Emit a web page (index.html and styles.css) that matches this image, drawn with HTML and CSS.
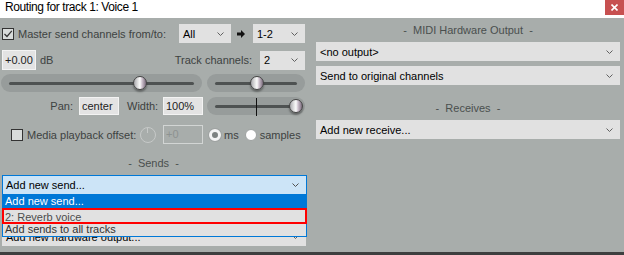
FILE: index.html
```html
<!DOCTYPE html>
<html lang="en">
<head>
    <meta charset="UTF-8">
    <meta name="viewport" content="width=device-width, initial-scale=1.0">
    <title>Routing for track 1: Voice 1</title>
    <link rel="stylesheet" href="styles.css">
</head>
<body>

<div class="window">
    <div class="titlebar">
        <span class="title">Routing for track 1: Voice 1</span>
        <span class="close-btn">
            <svg width="7" height="7" viewBox="0 0 7 7"><path d="M0.5 0.5 L6.5 6.5 M6.5 0.5 L0.5 6.5" stroke="#fff" stroke-width="1.6"/></svg>
        </span>
    </div>

    <div class="panes">
        <!-- left side: master send, volume/pan, sends -->
        <div class="left">
            <div class="row row-master">
                <span class="checkbox">
                    <svg width="10" height="10" viewBox="0 0 10 10"><path d="M1.5 5 L4 7.5 L8.8 1.8" fill="none" stroke="#333" stroke-width="1.2"/></svg>
                </span>
                <span class="label master-label">Master send channels from/to:</span>
                <div class="combo combo-small">All<svg class="chev" width="7" height="4" viewBox="0 0 7 4"><path d="M0.5 0.5 L3.5 3.5 L6.5 0.5" fill="none" stroke="#606060"/></svg></div>
                <svg class="arrow" width="8" height="8" viewBox="0 0 8 8"><path d="M0 2.5 H4 V0 L8 4 L4 8 V5.5 H0 Z" fill="#111"/></svg>
                <div class="combo combo-small">1-2<svg class="chev" width="7" height="4" viewBox="0 0 7 4"><path d="M0.5 0.5 L3.5 3.5 L6.5 0.5" fill="none" stroke="#606060"/></svg></div>
            </div>

            <div class="row row-volume">
                <span class="field field-vol">+0.00</span>
                <span class="label unit">dB</span>
                <span class="label channels-label">Track channels:</span>
                <div class="combo combo-channels">2<svg class="chev" width="7" height="4" viewBox="0 0 7 4"><path d="M0.5 0.5 L3.5 3.5 L6.5 0.5" fill="none" stroke="#606060"/></svg></div>
            </div>

            <div class="row row-sliders">
                <div class="trough trough-volume">
                    <div class="rail"></div>
                    <div class="knob" style="left: 139px"></div>
                </div>
                <div class="trough trough-small">
                    <div class="rail"></div>
                    <div class="knob" style="left: 50px"></div>
                </div>
            </div>

            <div class="row row-pan">
                <span class="label pan-label">Pan:</span>
                <span class="field field-pan">center</span>
                <span class="label width-label">Width:</span>
                <span class="field field-pan">100%</span>
                <div class="trough trough-small">
                    <div class="rail"></div>
                    <div class="center-mark"></div>
                    <div class="knob" style="left: 89px"></div>
                </div>
            </div>

            <div class="row row-offset">
                <span class="checkbox checkbox-offset"></span>
                <span class="label offset-label">Media playback offset:</span>
                <span class="dial"></span>
                <span class="field field-disabled">+0</span>
                <span class="radio radio-on"></span>
                <span class="label radio-label">ms</span>
                <span class="radio"></span>
                <span class="label radio-label">samples</span>
            </div>

            <div class="section-title">-&nbsp; Sends &nbsp;-</div>

            <div class="send-area">
                <div class="combo combo-active">Add new send...<svg class="chev" width="7" height="4" viewBox="0 0 7 4"><path d="M0.5 0.5 L3.5 3.5 L6.5 0.5" fill="none" stroke="#505050"/></svg></div>
                <ul class="dropdown">
                    <li class="item item-selected">Add new send...</li>
                    <li class="item item-marked">2: Reverb voice</li>
                    <li class="item item-last">Add sends to all tracks</li>
                </ul>
                <div class="combo combo-hw">Add new hardware output...<svg class="chev" width="7" height="4" viewBox="0 0 7 4"><path d="M0.5 0.5 L3.5 3.5 L6.5 0.5" fill="none" stroke="#606060"/></svg></div>
            </div>
        </div>

        <!-- right side: midi output, receives -->
        <div class="right">
            <div class="section-title section-top">-&nbsp; MIDI Hardware Output &nbsp;-</div>
            <div class="combo combo-wide">&lt;no output&gt;<svg class="chev" width="7" height="4" viewBox="0 0 7 4"><path d="M0.5 0.5 L3.5 3.5 L6.5 0.5" fill="none" stroke="#606060"/></svg></div>
            <div class="combo combo-wide">Send to original channels<svg class="chev" width="7" height="4" viewBox="0 0 7 4"><path d="M0.5 0.5 L3.5 3.5 L6.5 0.5" fill="none" stroke="#606060"/></svg></div>
            <div class="section-title section-receives">-&nbsp; Receives &nbsp;-</div>
            <div class="combo combo-wide">Add new receive...<svg class="chev" width="7" height="4" viewBox="0 0 7 4"><path d="M0.5 0.5 L3.5 3.5 L6.5 0.5" fill="none" stroke="#606060"/></svg></div>
        </div>
    </div>

    <div class="bottom-edge"></div>
</div>

</body>
</html>
```

FILE: styles.css
```css
/* Window frame */
body {
    margin: 0;
    font-family: "Liberation Sans", Arial, sans-serif;
    font-size: 11px;
    color: #000;
}

.window {
    width: 624px;
    height: 255px;
    display: flex;
    flex-direction: column;
    background-color: #a8adab;
    overflow: hidden;
}

.titlebar {
    height: 18px;
    background-color: #fff;
    display: flex;
    justify-content: space-between;
    align-items: flex-start;
}

.title {
    font-size: 12px;
    line-height: 14px;
    padding-left: 5px;
    letter-spacing: -0.4px;
}

.close-btn {
    width: 19px;
    height: 15px;
    background-color: #c75050;
    display: flex;
    align-items: center;
    justify-content: center;
}

.panes {
    flex: 1;
    display: flex;
}

.bottom-edge {
    height: 3px;
    background-color: #3e3f3f;
}

/* Columns */
.left {
    width: 305px;
    padding-left: 2px;
    display: flex;
    flex-direction: column;
}

.right {
    width: 304px;
    margin-left: 9px;
    display: flex;
    flex-direction: column;
}

.row {
    display: flex;
    align-items: center;
    width: 303px;
}

.label {
    color: #3d4241;
    white-space: nowrap;
}

/* Combo boxes */
.combo {
    display: flex;
    align-items: center;
    justify-content: space-between;
    box-sizing: border-box;
    height: 19px;
    padding: 0 7px 0 4px;
    background-color: #e1e1e1;
    white-space: nowrap;
}

.combo-small {
    width: 52px;
    height: 19px;
}

.combo-channels {
    width: 45px;
    margin-left: 8px;
}

.combo-wide {
    width: 304px;
    margin-top: 5px;
}

.combo-active {
    width: 305px;
    height: 20px;
    border: 1px solid #0078d7;
    background-color: #cce4f7;
    padding-left: 3px;
}

.combo-hw {
    width: 304px;
    margin-top: 32px;
}

/* Text fields */
.field {
    box-sizing: border-box;
    height: 18px;
    line-height: 16px;
    padding: 0 2px;
    border: 1px solid #f3f3f3;
    background-color: #e3e3e3;
    color: #222;
}

.field-vol {
    width: 34px;
    height: 20px;
    line-height: 18px;
}

.field-pan {
    width: 40px;
}

.field-disabled {
    width: 40px;
    height: 19px;
    line-height: 17px;
    margin-left: 7px;
    background-color: transparent;
    border-color: #d2d5d4;
    color: #8d9291;
}

/* Checkboxes and radios */
.checkbox {
    width: 12px;
    height: 12px;
    box-sizing: border-box;
    border: 1px solid #333;
    background-color: #d8dbda;
    display: flex;
    align-items: center;
    justify-content: center;
}

.radio {
    width: 12px;
    height: 12px;
    box-sizing: border-box;
    border-radius: 50%;
    border: 1px solid #9ea2a1;
    background-color: #fff;
    margin-left: 6px;
}

.radio-on {
    border: 3px solid #f4f4f4;
    background-color: #7d8281;
    box-shadow: 0 0 0 1px #9ea2a1;
}

.radio-label {
    margin-left: 3px;
}

/* Row specifics */
.row-master {
    height: 19px;
    margin-top: 6px;
}

.master-label {
    margin-left: 4px;
    flex: 1;
}

.arrow {
    margin: 0 8px 0 6px;
}

.row-volume {
    height: 20px;
    margin-top: 7px;
}

.unit {
    margin-left: 4px;
    flex: 1;
}

.combo-channels {
    height: 19px;
}

.row-sliders {
    height: 18px;
    margin-top: 4px;
    justify-content: space-between;
}

.row-pan {
    height: 20px;
    margin-top: 4px;
}

.pan-label {
    width: 71px;
    text-align: right;
    margin-right: 6px;
}

.width-label {
    width: 30px;
    margin: 0 6px 0 8px;
}

.row-pan .trough-small {
    margin-left: auto;
}

.row-offset {
    height: 19px;
    margin-top: 9px;
}

.checkbox-offset {
    margin-left: 9px;
}

.offset-label {
    width: 106px;
    margin-left: 4px;
}

.dial {
    position: relative;
    width: 16px;
    height: 16px;
    box-sizing: border-box;
    margin-left: 7px;
    border-radius: 50%;
    border: 1px solid #c6c9c8;
}

.dial::after {
    content: "";
    position: absolute;
    left: 6px;
    top: 0;
    width: 1px;
    height: 5px;
    background-color: #c6c9c8;
}

/* Sliders */
.trough {
    position: relative;
    height: 18px;
    border-radius: 9px;
    background-color: #979c9b;
    display: flex;
    align-items: center;
}

.trough-volume {
    width: 201px;
    margin-left: -1px;
}

.trough-small {
    width: 98px;
}

.rail {
    flex: 1;
    height: 3px;
    margin: 0 8px;
    border-radius: 2px;
    background-color: #4e5252;
}

.center-mark {
    position: absolute;
    left: 49px;
    top: 1px;
    width: 1px;
    height: 18px;
    background-color: #111;
}

.knob {
    position: absolute;
    top: 50%;
    width: 14px;
    height: 14px;
    margin: -7px 0 0 -7px;
    box-sizing: border-box;
    border-radius: 50%;
    border: 1px solid #464646;
    background: linear-gradient(90deg, #a9a9ad 0%, #e6e6e6 35%, #fbfbfb 50%, #cbbfcb 68%, #7a6b7c 100%);
    box-shadow: 0 2px 2px rgba(0, 0, 0, 0.35);
}

/* Section titles */
.section-title {
    line-height: 14px;
    text-align: center;
    color: #4a4f4e;
    white-space: nowrap;
}

.left .section-title {
    width: 303px;
    margin-top: 12px;
}

.section-top {
    margin-top: 5px;
}

.section-receives {
    margin-top: 16px;
}

/* Sends dropdown */
.send-area {
    position: relative;
    margin-top: 5px;
}

.dropdown {
    position: absolute;
    top: 20px;
    left: 0;
    width: 305px;
    margin: 0;
    padding: 0;
    list-style: none;
    box-sizing: border-box;
    border: 1px solid #0078d7;
    border-top: none;
    background-color: #e1e1e1;
    z-index: 10;
}

.item {
    box-sizing: border-box;
    padding-left: 2px;
    white-space: nowrap;
    overflow: hidden;
}

.item-selected {
    height: 13px;
    line-height: 13px;
    background-color: #0078d7;
    color: #fff;
}

.item-marked {
    height: 16px;
    line-height: 14px;
    border: 2px solid #f00;
    margin-left: -1px;
    width: 305px;
    padding-left: 1px;
    color: #4d4d4d;
}

.item-last {
    height: 12px;
    line-height: 11px;
    color: #333;
}
```
